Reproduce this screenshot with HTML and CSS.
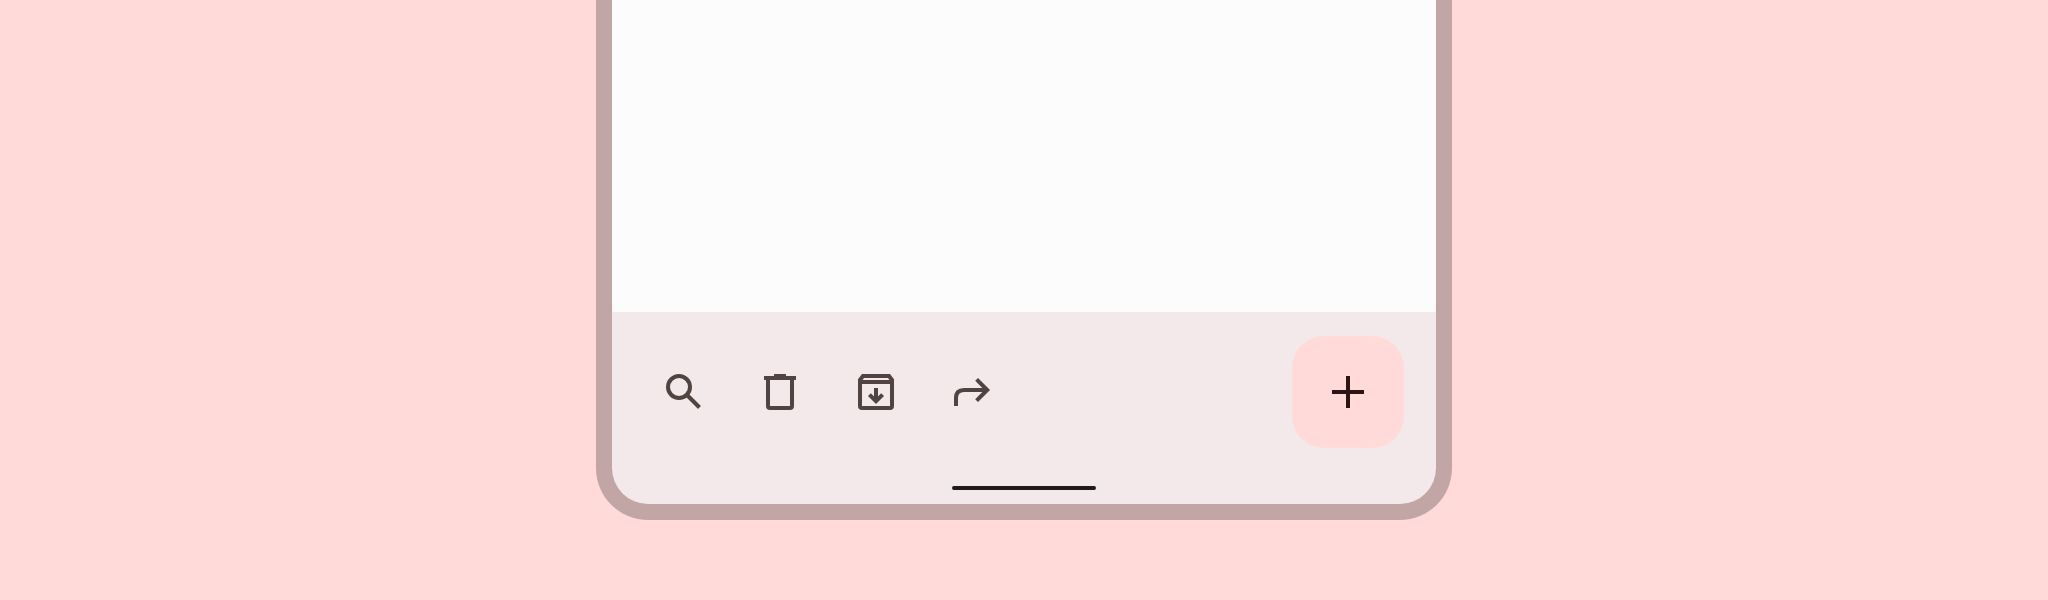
FILE: index.html
```html
<!DOCTYPE html>
<html lang="en">
<head>
<meta charset="utf-8">
<title>Bottom app bar</title>
<link rel="stylesheet" href="styles.css">
</head>
<body>
<main class="device">
  <section class="screen"></section>
  <footer class="bottom">
    <div class="bar">
      <nav class="actions">
        <button class="action" aria-label="Search"><svg viewBox="0 0 48 48"><circle cx="19" cy="19" r="11"/><path d="M26.5 26.5 39.5 39.5"/></svg></button>
        <button class="action" aria-label="Delete"><svg viewBox="0 0 48 48"><path d="M8 10H40M18 8H30"/><path d="M12 10V38Q12 40 14 40H34Q36 40 36 38V10"/></svg></button>
        <button class="action" aria-label="Archive"><svg viewBox="0 0 48 48"><path d="M8 14V12L11 8H37L40 12V38Q40 40 38 40H10Q8 40 8 38V14H40"/><path d="M24 20V32M17.4 26.6 24 33.2 30.6 26.6"/></svg></button>
        <button class="action" aria-label="Forward"><svg viewBox="0 0 48 48"><path d="M8 38V30Q8 22 16 22H38M28.6 11.4 39.2 22 28.6 32.6"/></svg></button>
      </nav>
      <button class="fab" aria-label="Add"><svg viewBox="0 0 48 48"><path d="M8 24H40M24 8V40"/></svg></button>
    </div>
    <div class="handle"></div>
  </footer>
</main>
</body>
</html>
```
FILE: styles.css
```css
body { margin: 0; height: 600px; overflow: hidden; background: #ffdad8; }
.device { box-sizing: border-box; width: 856px; height: 520px; margin: 0 auto; display: flex; flex-direction: column; border: 16px solid #c2a6a5; border-top: 0; border-radius: 0 0 52px 52px; overflow: hidden; background: #f3e9ea; }
.screen { height: 312px; background: #fcfcfc; }
.bottom { height: 192px; display: flex; flex-direction: column; align-items: center; }
.bar { box-sizing: border-box; width: 100%; height: 160px; padding: 0 32px 0 24px; display: flex; align-items: center; justify-content: space-between; }
.actions { display: flex; }
button { border: 0; padding: 0; display: flex; align-items: center; justify-content: center; background: none; }
.action { width: 96px; height: 96px; }
svg { width: 48px; height: 48px; fill: none; stroke: #524343; stroke-width: 4; }
.fab { width: 112px; height: 112px; border-radius: 32px; background: #ffdad8; }
.fab svg { stroke: #2d1516; }
.handle { width: 144px; height: 4px; margin-top: 14px; border-radius: 2px; background: #201a1b; }
```
